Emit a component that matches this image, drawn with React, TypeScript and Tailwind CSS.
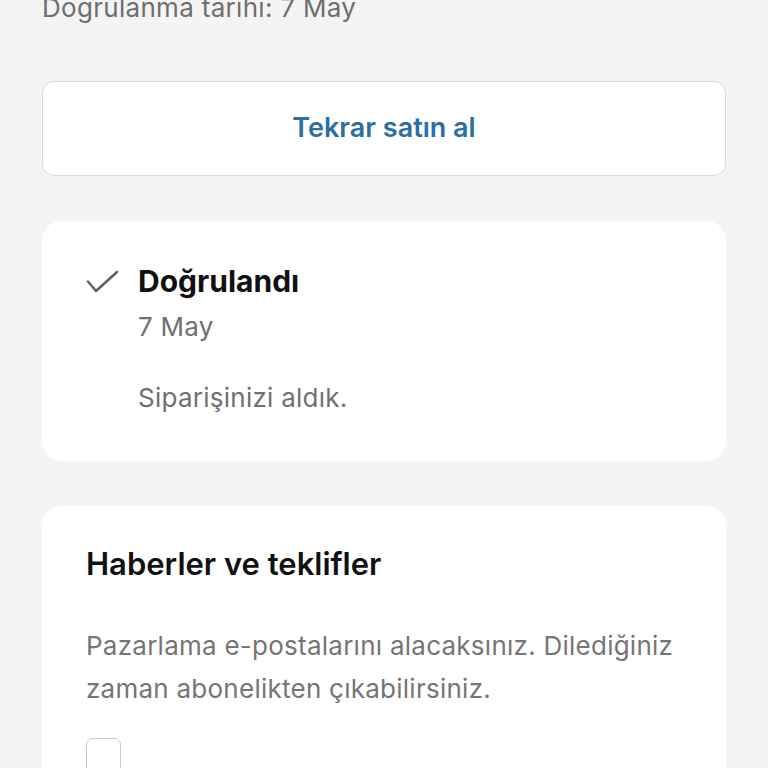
import React from "react";

function Check() {
  return (
    <svg width="34" height="26" viewBox="0 0 34 26" fill="none" className="shrink-0">
      <path d="M2 11.5 L10 21 L31 2" stroke="#5f5f5f" strokeWidth="2.4" strokeLinecap="round" strokeLinejoin="round" />
    </svg>
  );
}

export default function App() {
  return (
    <div
      className="h-[768px] overflow-hidden bg-[#f4f4f4] px-[42px]"
      style={{ fontFamily: "Inter, 'Noto Sans', sans-serif" }}
    >
      <p className="-mt-[8px] text-[26px] leading-[32px] tracking-[0.3px] text-[#6e6e6e]">Doğrulanma tarihi: 7 May</p>

      <button className="mt-[57px] flex h-[95px] w-full items-center justify-center rounded-[12px] border border-[#dadada] bg-white text-[27px] font-semibold text-[#2b6ea3]">
        Tekrar satın al
      </button>

      <section className="mt-[45px] h-[240px] rounded-[20px] bg-white pl-[44px] pt-[42px]">
        <div className="flex items-start gap-[18px]">
          <div className="pt-[7px]">
            <Check />
          </div>
          <div>
            <h2 className="text-[30px] font-bold leading-[36px] text-[#111]">Doğrulandı</h2>
            <p className="mt-[12px] text-[26px] leading-[32px] tracking-[0.25px] text-[#707070]">7 May</p>
            <p className="mt-[39px] text-[26px] leading-[32px] tracking-[0.25px] text-[#707070]">Siparişinizi aldık.</p>
          </div>
        </div>
      </section>

      <section className="mt-[45px] rounded-t-[20px] bg-white px-[44px] pt-[40px] pb-10">
        <h2 className="text-[31px] font-semibold leading-[36px] text-[#111]">Haberler ve teklifler</h2>
        <p className="mt-[42px] text-[26px] leading-[43px] tracking-[0.25px] text-[#757575]">
          Pazarlama e-postalarını alacaksınız. Dilediğiniz zaman abonelikten çıkabilirsiniz.
        </p>
        <div className="mt-[28px] h-[38px] w-[35px] rounded-[7px] border-[1.5px] border-[#c9c9c9]" />
      </section>
    </div>
  );
}
